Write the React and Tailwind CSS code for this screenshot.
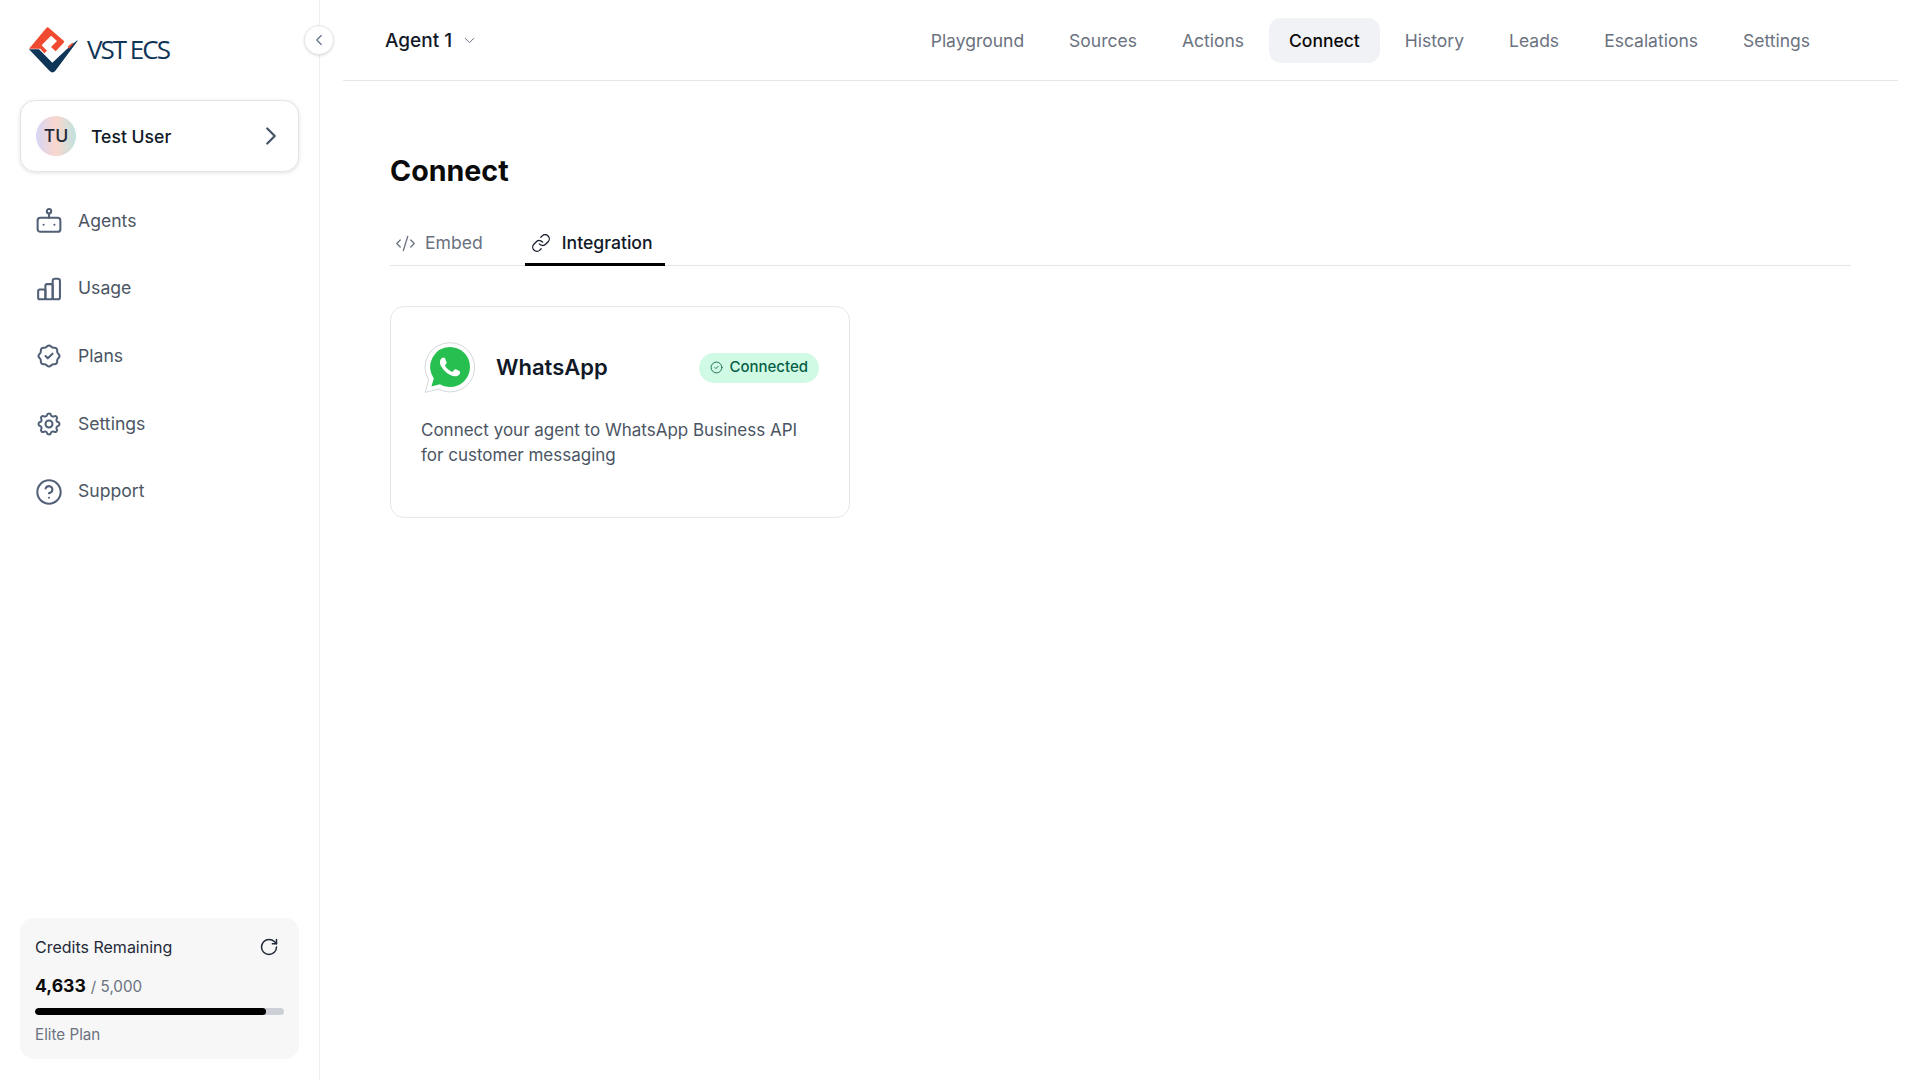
import React from "react";
import { ChevronLeft, ChevronRight, ChevronDown, RotateCw, CircleHelp, CodeXml, Link, CircleCheck } from "lucide-react";
import { TbRosetteDiscountCheck, TbSettings } from "react-icons/tb";

function BotIcon() {
  return (
    <svg width="26" height="26" viewBox="0 0 24 24" fill="none" stroke="currentColor" strokeWidth="1.9" strokeLinecap="round" strokeLinejoin="round">
      <circle cx="12" cy="3" r="2" />
      <path d="M12 5v4" />
      <rect x="1.5" y="9" width="21" height="13" rx="2.5" />
      <path d="M7 15.5h.01M17 15.5h.01" />
    </svg>
  );
}

function UsageIcon() {
  return (
    <svg width="26" height="26" viewBox="0 0 24 24" fill="none" stroke="currentColor" strokeWidth="1.9" strokeLinecap="round" strokeLinejoin="round">
      <rect x="2" y="12.5" width="6.7" height="9" rx="1.4" />
      <rect x="8.7" y="7.5" width="6.7" height="14" rx="1.4" />
      <rect x="15.4" y="2.5" width="6.7" height="19" rx="2" />
    </svg>
  );
}

function Logo() {
  return (
    <div className="flex items-center h-[48px]">
      <svg width="50" height="48" viewBox="0 0 150 144" className="shrink-0">
        <path d="M0 68 L52 6 Q56 2 60 6 L104 44 Q107 47 104 50 L80 76 L66 63 L84 45 L66 29 L38 58 L54 74 L46 82 L34 68 Z" fill="#f04b30" />
        <path d="M0 70 L30 70 L70 110 L126 58 L146 42 L144 47 L78 136 Q70 143 62 135 Z" fill="#0f3557" />
        <path d="M116 62 L130 50 L133 53 L120 68 Z" fill="#f04b30" />
      </svg>
      <span className="ml-[8px] mb-[3px] text-[26px] font-medium leading-none text-[#0f3557] tracking-[-2px] font-['Open_Sans','Liberation_Sans',sans-serif]">VST ECS</span>
    </div>
  );
}

function WhatsApp() {
  return (
    <svg width="51" height="51" viewBox="0 0 51 51" className="shrink-0">
      <path d="M26 .7a24.6 24.6 0 0 1 0 49.2c-4 0-8-1-11.4-2.8L1.2 50.4 4.6 38A24.6 24.6 0 0 1 26 .7z" fill="#fff" stroke="#d3d8dd" strokeWidth="1" />
      <path d="M26 5a20 20 0 0 1 0 40c-3.6 0-7-1-10-2.7L7.4 44.6l2.4-8.2A20 20 0 0 1 26 5z" fill="#28bf51" />
      <g transform="translate(6 5) scale(1.667)">
        <path fill="#fff" d="M17.472 14.382c-.297-.149-1.758-.867-2.08-.967-.273-.099-.471-.148-.67.15-.197.297-.767.966-.94 1.164-.173.199-.347.223-.644.075-.297-.15-1.255-.463-2.39-1.475-.883-.788-1.48-1.761-1.653-2.059-.173-.297-.018-.458.13-.606.134-.133.298-.347.446-.52.149-.174.198-.298.298-.497.099-.198.05-.371-.025-.52-.075-.149-.669-1.612-.916-2.207-.242-.579-.487-.5-.669-.51-.173-.008-.371-.01-.57-.01-.198 0-.52.074-.792.372-.272.297-1.04 1.016-1.04 2.479 0 1.462 1.065 2.875 1.213 3.074.149.198 2.096 3.2 5.077 4.487.709.306 1.262.489 1.694.625.712.227 1.36.195 1.871.118.571-.085 1.758-.719 2.006-1.413.248-.694.248-1.289.173-1.413-.074-.124-.272-.198-.57-.347z" />
      </g>
    </svg>
  );
}

const side = [
  { label: "Agents", icon: <BotIcon /> },
  { label: "Usage", icon: <UsageIcon /> },
  { label: "Plans", icon: <TbRosetteDiscountCheck size={28} strokeWidth={1.75} /> },
  { label: "Settings", icon: <TbSettings size={28} strokeWidth={1.75} /> },
  { label: "Support", icon: <CircleHelp size={28} strokeWidth={1.75} /> },
];

const top = ["Playground", "Sources", "Actions", "Connect", "History", "Leads", "Escalations", "Settings"];

export default function App() {
  return (
    <div className="flex h-screen w-full overflow-hidden bg-white font-['Inter',sans-serif] text-[#111827]">
      <aside className="relative flex h-full w-[320px] shrink-0 flex-col border-r border-[#eceef2]">
        <button className="absolute left-[304px] top-[25px] flex h-[30px] w-[30px] items-center justify-center rounded-full border border-[#e5e7eb] bg-white text-[#64748b] shadow-sm">
          <ChevronLeft size={18} strokeWidth={1.7} />
        </button>
        <div className="pl-[29px] pt-[26px]"><Logo /></div>
        <div className="mx-5 mt-[26px] flex h-[72px] items-center rounded-[15px] border border-[#e2e5ec] bg-white pl-[15px] pr-[12px] shadow-[0_1px_4px_rgba(0,0,0,0.12)]">
          <div className="flex h-10 w-10 items-center justify-center rounded-full bg-[linear-gradient(90deg,#d5d5f5,#fad6cc,#bfe3e0)] text-[17.6px] font-medium text-[#1f2937]">TU</div>
          <span className="ml-[15px] mt-[2px] flex-1 text-[17.6px] font-medium">Test User</span>
          <ChevronRight size={30} strokeWidth={1.8} className="text-[#475569]" />
        </div>
        <nav className="mt-[15px] flex flex-col">
          {side.map((s) => (
            <div key={s.label} className="flex h-[67.7px] items-center text-[#526077]">
              <div className="flex w-[78px] justify-center pl-[19px]"><span className="flex h-[28px] w-[28px] items-center justify-center">{s.icon}</span></div>
              <span className="text-[17.6px] text-[#4b5563]">{s.label}</span>
            </div>
          ))}
        </nav>
        <div className="mx-5 mb-[21px] mt-auto h-[141px] rounded-[14px] bg-[#f7f7f8] px-[15px] pt-[19px]">
          <div className="flex items-center justify-between pr-[5px]">
            <span className="text-[16px] leading-[20px] text-[#1f2937]">Credits Remaining</span>
            <RotateCw size={20} strokeWidth={1.8} className="text-[#1f2937]" />
          </div>
          <div className="mt-[18px] flex items-baseline leading-[22px]">
            <span className="text-[17.6px] font-bold text-[#0a0a0a]">4,633</span>
            <span className="ml-[5px] text-[15.2px] text-[#6b7280]">/ 5,000</span>
          </div>
          <div className="mt-[10px] h-[7px] w-[249px] overflow-hidden rounded-full bg-[#ccd0d6]">
            <div className="h-full w-[231px] rounded-full bg-black" />
          </div>
          <div className="mt-[10px] text-[15.2px] leading-[20px] text-[#6b7280]">Elite Plan</div>
        </div>
      </aside>
      <main className="ml-[23px] mr-[22px] flex min-w-0 flex-1 flex-col">
        <header className="flex h-[81px] shrink-0 items-center border-b border-[#e5e7eb] pl-[42px] pr-[68px]">
          <span className="mt-[2px] text-[19px] font-medium">Agent 1</span>
          <ChevronDown size={17} strokeWidth={1.4} className="ml-[9px] mt-[1px] text-[#6b7280]" />
          <nav className="ml-auto flex gap-[5px]">
            {top.map((t) => (
              <div key={t} className={t === "Connect" ? "flex h-[45px] items-center rounded-[12px] bg-[#f1f2f6] px-[20px] pt-[2px] text-[17.5px] font-medium text-[#0a0a0a]" : "flex h-[45px] items-center rounded-[12px] px-[20px] pt-[2px] text-[17.5px] text-[#6b7280]"}>{t}</div>
            ))}
          </nav>
        </header>
        <div className="px-[47px] pt-[68px]">
          <h1 className="text-[28.6px] font-bold leading-[44px] text-[#0a0a0a]">Connect</h1>
          <div className="mt-[29px] flex h-[44px] border-b border-[#e5e7eb]">
            <div className="flex h-[44px] items-center gap-[9px] border-b-[3px] border-transparent pl-[5px] pr-[12px] pt-[1px] text-[#6b7280]">
              <CodeXml size={21} strokeWidth={1.5} />
              <span className="text-[17.6px]">Embed</span>
            </div>
            <div className="ml-[30px] flex h-[44px] items-center gap-[11px] border-b-[3px] border-black pl-[6px] pr-[12px] pt-[1px] text-[#111827]">
              <Link size={20} strokeWidth={1.5} />
              <span className="text-[17.6px] font-medium">Integration</span>
            </div>
          </div>
          <div className="mt-[40px] h-[212px] w-[460px] rounded-[14px] border border-[#e5e7eb] bg-white pl-[33px] pr-[30px] pt-[35px]">
            <div className="flex items-center">
              <WhatsApp />
              <span className="ml-[21px] flex-1 text-[22px] font-semibold text-[#111827]">WhatsApp</span>
              <span className="flex h-[30px] items-center gap-[6px] rounded-full bg-[#d1fae5] pl-[11px] pr-[11px] text-[15px] font-medium text-[#065f46]">
                <CircleCheck size={13} strokeWidth={1.6} />
                Connected
              </span>
            </div>
            <p className="-ml-[3px] mt-[25px] text-[17px] leading-[25px] text-[#4b5563]">Connect your agent to WhatsApp Business API for customer messaging</p>
          </div>
        </div>
      </main>
    </div>
  );
}
